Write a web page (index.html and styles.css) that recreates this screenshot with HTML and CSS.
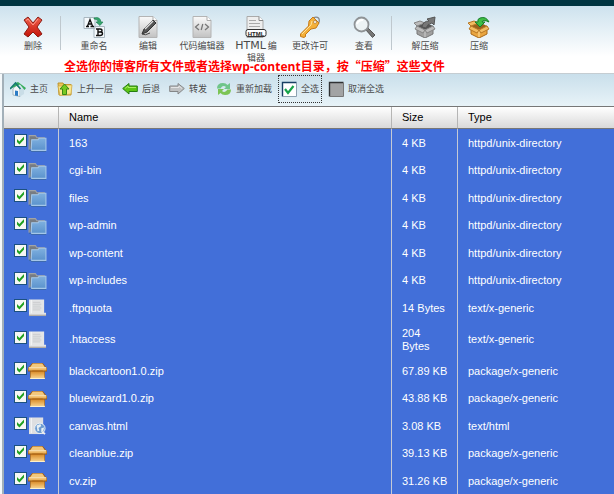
FILE: index.html
```html
<!DOCTYPE html>
<html lang="zh-CN">
<head>
<meta charset="utf-8">
<title>文件管理器</title>
<link rel="stylesheet" href="styles.css">
</head>
<body>
<svg class="defs" aria-hidden="true">
  <defs>
    <linearGradient id="gRed" x1="0" y1="0" x2="0" y2="1"><stop offset="0" stop-color="#f0604c"/><stop offset="1" stop-color="#c31308"/></linearGradient>
    <linearGradient id="gPage" x1="0" y1="0" x2="0" y2="1"><stop offset="0" stop-color="#fafafa"/><stop offset="1" stop-color="#c2c2c2"/></linearGradient>
    <linearGradient id="gFolder" x1="0" y1="0" x2="0" y2="1"><stop offset="0" stop-color="#7fb0df"/><stop offset="1" stop-color="#5b92cc"/></linearGradient>
    <linearGradient id="gBox" x1="0" y1="0" x2="0" y2="1"><stop offset="0" stop-color="#d98c2b"/><stop offset="1" stop-color="#f7cf85"/></linearGradient>
  </defs>
  <symbol id="folder" viewBox="0 0 18 17">
    <path d="M1 15V1.500h6l1.500 2h7V6" fill="#777c82" stroke="#a2a4a6"/>
    <path d="M3.500 5.500h6l1-1.500h6.500v11.500h-14z" fill="url(#gFolder)" stroke="#a5c7e8"/>
    <path d="M1 15.500h2M3 16.500h14" stroke="#3d69ad"/>
  </symbol>
  <symbol id="text" viewBox="0 0 18 19">
    <path d="M0 .5h16v14h2V18H0z" fill="#e4e5e6"/>
    <path d="M0 16.500h18V18H0z" fill="#b3aea7"/>
    <path d="M4 3.500h8M4 5.500h9M4 7.500h8M4 9.500h9M4 11.500h8" stroke="#c8cacc"/>
    <path d="M2.500 1v14" stroke="#f8f8f8"/>
  </symbol>
  <symbol id="web" viewBox="0 0 18 19">
    <path d="M0 .5h15V18H0z" fill="#dedfe1"/>
    <path d="M2.500 1v16" stroke="#f8f8f8"/>
    <circle cx="11.500" cy="12" r="5.500" fill="#6c9bd0" stroke="#eef3f8"/>
    <path d="M8 9l4-1.500 1 2-3 2 1 3-2 .5zM13 12l3-1-1 4-2 1z" fill="#e6eff5"/>
    <path d="M14 16l3 2" stroke="#eee" stroke-width="2"/>
  </symbol>
  <symbol id="package" viewBox="1 0 18 17">
    <path d="M5 1h10l4 5v3h-2v7H3V9H1V6z" fill="#9e5b12"/>
    <path d="M5.500 1.500h9L17 5H3z" fill="#f3c87d"/>
    <path d="M1.500 5h17v3h-17z" fill="#eeb660"/>
    <path d="M3.500 9h13v6h-13z" fill="url(#gBox)"/>
    <path d="M2 5.500h16M3 15.500h14" stroke="#fff0c8"/>
    <path d="M5 8.500h10" stroke="#b56c18"/>
  </symbol>
</svg>

<div class="topbar"></div>

<header class="toolbar">
  <button class="tool" type="button">
    <svg viewBox="0 0 22 22"><path d="M2 4l4-3 5 6 5-6 4 3-5 7 5 7-4 3-5-5-5 5-4-3 5-7z" fill="url(#gRed)" stroke="#8d1b12" stroke-linejoin="round"/><path d="M4 4.500L6 3l5 6 5-6" stroke="#ff9d8c" fill="none"/></svg>
    <span>删除</span>
  </button>
  <span class="divider"></span>
  <button class="tool" type="button">
    <svg viewBox="0 0 22 22"><path d="M1 1.500h11v11H1zM11 10.500h10.500v11H11z" fill="#f4f9fc" stroke="#a9b7c0"/><path d="M3 10.500h3M7.500 10.500H11M4.500 10L7 3.500 9.500 10M5.500 8h3" stroke="#111" stroke-width="1.300" fill="none"/><path d="M13 13h4q2 0 2 1.500T17 16h-2 2.500q2 0 2 1.700T17 19.500h-4M15 13v6.500" stroke="#111" stroke-width="1.400" fill="none"/><path d="M11 2q6-2 7 4h2l-3 3.500L13 6h2q0-3-4-3z" fill="#35a56d" stroke="#17784a" stroke-width=".6"/></svg>
    <span>重命名</span>
  </button>
  <button class="tool" type="button">
    <svg viewBox="0 0 22 22"><path d="M2 .5h14l4 4v17H2z" fill="url(#gPage)" stroke="#b4b4b4"/><path d="M16 .5v4h4" fill="#fff" stroke="#aaa"/><path d="M5 18l2-5L16 4l3 3-9 9z" fill="#555" stroke="#333"/><path d="M8 13l8-8" stroke="#ddd" stroke-width="1.500"/><path d="M5 18q3 2 8-1" stroke="#444" fill="none"/></svg>
    <span>编辑</span>
  </button>
  <button class="tool" type="button">
    <svg viewBox="0 0 22 22"><path d="M2 .5h14l4 4v17H2z" fill="url(#gPage)" stroke="#b4b4b4"/><path d="M16 .5v4h4" fill="#fff" stroke="#aaa"/><path d="M8 8l-3.500 3L8 14M14 8l3.500 3-3.500 3M11.800 8l-1.600 6" stroke="#777" stroke-width="1.300" fill="none"/></svg>
    <span>代码编辑器</span>
  </button>
  <button class="tool" type="button">
    <svg viewBox="0 0 22 22"><path d="M2 .5h12l4 4v17H2z" fill="#eee" stroke="#aaa"/><path d="M14 .5v4h4" fill="#fff" stroke="#888"/><path d="M4 4.500h7M4 7.500h11M4 10.500h11" stroke="#aaa"/><rect x="1" y="13.500" width="20" height="7" rx="2" fill="#fff" stroke="#333"/><text class="tag" x="11" y="19.500" text-anchor="middle">HTML</text></svg>
    <span><b class="latin">HTML</b> 编辑器</span>
  </button>
  <button class="tool" type="button">
    <svg viewBox="0 0 22 22"><circle cx="17" cy="4.500" r="3.300" fill="none" stroke="#888" stroke-width="1.300"/><path d="M10 5l4-4 6 6-3 5-5 1-6 6 1 1-2 1.500-3.500-1V18l8-8z" fill="#f4b03a" stroke="#c67a18"/><path d="M3 18l9-9 1-4" stroke="#ffe29b" fill="none"/><circle cx="16" cy="6" r="1.500" fill="#fff" stroke="#a87630" stroke-width=".7"/></svg>
    <span>更改许可</span>
  </button>
  <button class="tool" type="button">
    <svg viewBox="0 0 22 22"><path d="M13 14l2-2 7 7-2.500 2.500z" fill="#777" stroke="#555"/><circle cx="8.500" cy="8.500" r="7" fill="#edf3f5" stroke="#8f9396" stroke-width="1.800"/><path d="M4 8q1-4 6-4" stroke="#fff" stroke-width="2" fill="none"/></svg>
    <span>查看</span>
  </button>
  <span class="divider"></span>
  <button class="tool" type="button">
    <svg viewBox="0 0 22 22"><path d="M3 10l8 3 8-3v8l-8 4-8-4z" fill="#a0a0a0" stroke="#777"/><path d="M3 10l8-4 8 4-8 4z" fill="#555"/><path d="M11 13v8" stroke="#ccc"/><path d="M3 10l-3-3 6-2 5 2zM3 10l-2 3 8 4 2-3zM19 10l2 3-8 4-2-3z" fill="#bcbcbc" stroke="#858585"/><path d="M8 11q1-6 7-6l-2-2 8-2-1 8-2-2q-4 0-6 5z" fill="#777" stroke="#555"/></svg>
    <span>解压缩</span>
  </button>
  <button class="tool" type="button">
    <svg viewBox="0 0 22 22"><path d="M3 10l8 3 8-3v8l-8 4-8-4z" fill="#e9a540" stroke="#a96a1b"/><path d="M3 10l8-4 8 4-8 4z" fill="#99601d"/><path d="M11 13v8" stroke="#ffe0a0"/><path d="M3 10L0 7l6-2 5 2zM3 10l-2 3 8 4 2-3zM19 10l2 3-8 4-2-3z" fill="#f3bd63" stroke="#b87724"/><path d="M21 6Q18 0 12 2 9 3 10 6H7l5 5 5-5h-3q1-3 7 0z" fill="#3fbd45" stroke="#187e2a"/></svg>
    <span>压缩</span>
  </button>
  <p class="note">全选你的博客所有文件或者选择<span class="note-latin">wp-content</span>目录，按“压缩”这些文件</p>
</header>

<main class="panel">
  <nav class="actions">
    <button class="action" type="button">
      <svg viewBox="0 0 16 16"><path d="M3 8v6l7 1.500V8L6 4z" fill="#f5f7f8" stroke="#8aa0ad" stroke-width=".7"/><path d="M10 8v7.500l4-2.500V7z" fill="#c9dde7"/><path d="M0 8l5.500-6L8 1l8 6-1.500 2L10 3.500z" fill="#38ad5c"/><path d="M0 8l5.500-6 5 6" fill="none" stroke="#197c75" stroke-width="1.600"/><path d="M5 14.500v-5l3 .5v5z" fill="#2d7cc5"/></svg>
      <span>主页</span>
    </button>
    <button class="action" type="button">
      <svg viewBox="0 0 16 16"><path d="M1 2h5l1 1.500h7V14H2z" fill="#ecc556" stroke="#bd9430"/><path d="M3 14.500L1 5h5l2-1h7l-1 9z" fill="#fae68e" stroke="#cfa740" stroke-width=".7"/><path d="M7.500 3L12 8H9.500v5.500h-4V8H3z" fill="#77c922" stroke="#378a16"/></svg>
      <span>上升一层</span>
    </button>
    <button class="action" type="button">
      <svg viewBox="0 0 16 16"><path d="M.7 7.500L7 2.500V5h8.300v5.500H7V13z" fill="#5cc516" stroke="#267d12"/><path d="M3 7.500l3-2.500v1.500h8" fill="none" stroke="#a8ec64"/></svg>
      <span>后退</span>
    </button>
    <button class="action" type="button">
      <svg viewBox="0 0 16 16"><path d="M15.300 7.500L9 2.500V5H.7v5.500H9V13z" fill="#bfc1c2" stroke="#858788"/><path d="M2 6.500h8V5l3 2.500" fill="none" stroke="#e4e5e6"/></svg>
      <span>转发</span>
    </button>
    <button class="action" type="button">
      <svg viewBox="0 0 16 16"><path d="M1 7.500Q1 2 7 2q3 0 4.500 2L14 2v6H8l2-2Q7 3.500 4.500 7.500z" fill="#6fc58a"/><path d="M15 8.500Q15 14 9 14q-3 0-4.500-2L2 14V8h6l-2 2q3 2.500 5.500-1.500z" fill="#7cc455"/></svg>
      <span>重新加载</span>
    </button>
    <button class="action action-focus" type="button">
      <svg viewBox="0 0 16 16"><path d="M1 1h14v14H1z" fill="#fff"/><path d="M1.500 15.500v-14h14" fill="none" stroke="#173f63" stroke-width="1.400"/><path d="M2 15.500h13.500V2" fill="none" stroke="#8ca1b0"/><path d="M4 8l3 4 5.500-7" fill="none" stroke="#17a34a" stroke-width="2.200"/></svg>
      <span>全选</span>
    </button>
    <button class="action" type="button">
      <svg viewBox="0 0 16 16"><path d="M1 1h14v14H1z" fill="#a2a3a4"/><path d="M1.500 15.500v-14h14" fill="none" stroke="#303234" stroke-width="1.400"/><path d="M2 15.500h13.500V2" fill="none" stroke="#777"/></svg>
      <span>取消全选</span>
    </button>
  </nav>

  <table class="files">
    <colgroup><col class="col-pick"><col><col class="col-size"><col class="col-type"></colgroup>
    <thead><tr><th></th><th>Name</th><th>Size</th><th>Type</th></tr></thead>
    <tbody>
      <tr><td><div class="pick"><input type="checkbox" checked aria-label="163"><svg><use href="#folder"/></svg></div></td><td>163</td><td>4 KB</td><td>httpd/unix-directory</td></tr>
      <tr><td><div class="pick"><input type="checkbox" checked aria-label="cgi-bin"><svg><use href="#folder"/></svg></div></td><td>cgi-bin</td><td>4 KB</td><td>httpd/unix-directory</td></tr>
      <tr><td><div class="pick"><input type="checkbox" checked aria-label="files"><svg><use href="#folder"/></svg></div></td><td>files</td><td>4 KB</td><td>httpd/unix-directory</td></tr>
      <tr><td><div class="pick"><input type="checkbox" checked aria-label="wp-admin"><svg><use href="#folder"/></svg></div></td><td>wp-admin</td><td>4 KB</td><td>httpd/unix-directory</td></tr>
      <tr><td><div class="pick"><input type="checkbox" checked aria-label="wp-content"><svg><use href="#folder"/></svg></div></td><td>wp-content</td><td>4 KB</td><td>httpd/unix-directory</td></tr>
      <tr><td><div class="pick"><input type="checkbox" checked aria-label="wp-includes"><svg><use href="#folder"/></svg></div></td><td>wp-includes</td><td>4 KB</td><td>httpd/unix-directory</td></tr>
      <tr><td><div class="pick"><input type="checkbox" checked aria-label=".ftpquota"><svg><use href="#text"/></svg></div></td><td>.ftpquota</td><td>14 Bytes</td><td>text/x-generic</td></tr>
      <tr><td><div class="pick"><input type="checkbox" checked aria-label=".htaccess"><svg><use href="#text"/></svg></div></td><td>.htaccess</td><td>204 Bytes</td><td>text/x-generic</td></tr>
      <tr><td><div class="pick"><input type="checkbox" checked aria-label="blackcartoon1.0.zip"><svg><use href="#package"/></svg></div></td><td>blackcartoon1.0.zip</td><td>67.89 KB</td><td>package/x-generic</td></tr>
      <tr><td><div class="pick"><input type="checkbox" checked aria-label="bluewizard1.0.zip"><svg><use href="#package"/></svg></div></td><td>bluewizard1.0.zip</td><td>43.88 KB</td><td>package/x-generic</td></tr>
      <tr><td><div class="pick"><input type="checkbox" checked aria-label="canvas.html"><svg><use href="#web"/></svg></div></td><td>canvas.html</td><td>3.08 KB</td><td>text/html</td></tr>
      <tr><td><div class="pick"><input type="checkbox" checked aria-label="cleanblue.zip"><svg><use href="#package"/></svg></div></td><td>cleanblue.zip</td><td>39.13 KB</td><td>package/x-generic</td></tr>
      <tr><td><div class="pick"><input type="checkbox" checked aria-label="cv.zip"><svg><use href="#package"/></svg></div></td><td>cv.zip</td><td>31.26 KB</td><td>package/x-generic</td></tr>
    </tbody>
  </table>
</main>
</body>
</html>
```
FILE: styles.css
```css
* { box-sizing: border-box; }

body {
  margin: 0;
  overflow: hidden;
  background: #f4f8fa;
  font-family: "Liberation Sans", "Noto Sans CJK SC", sans-serif;
  font-size: 11px;
  line-height: 13px;
}

button {
  margin: 0;
  padding: 0;
  border: 0;
  background: none;
  color: #4a4a4a;
  font-family: "Noto Sans CJK SC", sans-serif;
  font-size: 9px;
  line-height: 12px;
}

.defs {
  position: absolute;
  width: 0;
  height: 0;
}

.topbar {
  height: 6px;
  background: #003541;
}

/* Main toolbar */
.toolbar {
  position: relative;
  display: flex;
  align-items: flex-start;
  height: 68px;
  padding: 10px 6px 0;
  border-bottom: 1px solid #c5cdd2;
  background: linear-gradient(#cde2ee, #fff 75%);
}

.tool {
  display: flex;
  flex: none;
  flex-direction: column;
  align-items: center;
  gap: 2px;
  width: 54px;
  padding: 0 4px;
}

.tool svg {
  width: 22px;
  height: 22px;
}

.latin {
  font-family: "DejaVu Sans", sans-serif;
  font-size: 11px;
  font-weight: normal;
}

.tag {
  fill: #222;
  font: bold 6px "Liberation Sans", sans-serif;
}

.divider {
  flex: none;
  width: 1px;
  height: 34px;
  margin: 0 6px 0 0;
  background: #bfc8ce;
}

.note {
  position: absolute;
  top: 52px;
  left: 64px;
  margin: 0;
  color: #f00;
  font-family: "Noto Sans CJK SC", sans-serif;
  font-size: 12px;
  font-weight: bold;
  line-height: 16px;
  white-space: nowrap;
}

.note-latin { font-family: "Open Sans", sans-serif; }

/* File panel */
.panel {
  margin-left: 2px;
  border-left: 2px solid #a3b0b9;
}

.actions {
  display: flex;
  align-items: center;
  gap: 9px;
  height: 32px;
  padding: 0 6px 2px;
  background: linear-gradient(#c9dfeb, #e8f3f8);
}

.action {
  display: flex;
  align-items: center;
  gap: 4px;
}

.action svg {
  width: 16px;
  height: 16px;
}

.action-focus {
  height: 22px;
  outline: 1px dotted #333;
  outline-offset: 2px;
}

/* File list */
.files {
  width: 100%;
  border-collapse: separate;
  border-spacing: 0;
  border-top: 1px solid #777;
  table-layout: fixed;
}

.col-pick { width: 55px; }
.col-size { width: 66px; }
.col-type { width: 156px; }

.files th {
  height: 22px;
  padding: 0 9px 0 10px;
  border-right: 1px solid #b5b5b5;
  border-bottom: 1px solid #777;
  background: linear-gradient(#fff, #d9d9d9);
  color: #000;
  font-weight: normal;
  text-align: left;
}

.files td {
  height: 28px;
  padding: 0 9px 0 10px;
  border-right: 1px solid #c4c9d6;
  background: #426fd9;
  color: #fff;
}

.files tr:nth-child(even) td { height: 27px; }
.files tr:nth-child(8) td { height: 35px; }

.files th:last-child,
.files td:last-child { border-right: 0; }

.files td:first-child { padding-right: 0; }

.pick {
  display: flex;
  align-items: flex-end;
  gap: 1px;
}

.pick input {
  flex: none;
  width: 13px;
  height: 13px;
  margin: 0 0 5px;
  border: 1px solid #1c5180;
  appearance: none;
  background: #f6f7f4;
}

.pick input:checked::before {
  content: "";
  display: block;
  width: 11px;
  height: 11px;
  background: #21a121;
  clip-path: polygon(18% 36%, 40% 58%, 82% 14%, 82% 42%, 40% 86%, 18% 64%);
}

.pick svg {
  flex: none;
  width: 19px;
  height: 18px;
}
```
